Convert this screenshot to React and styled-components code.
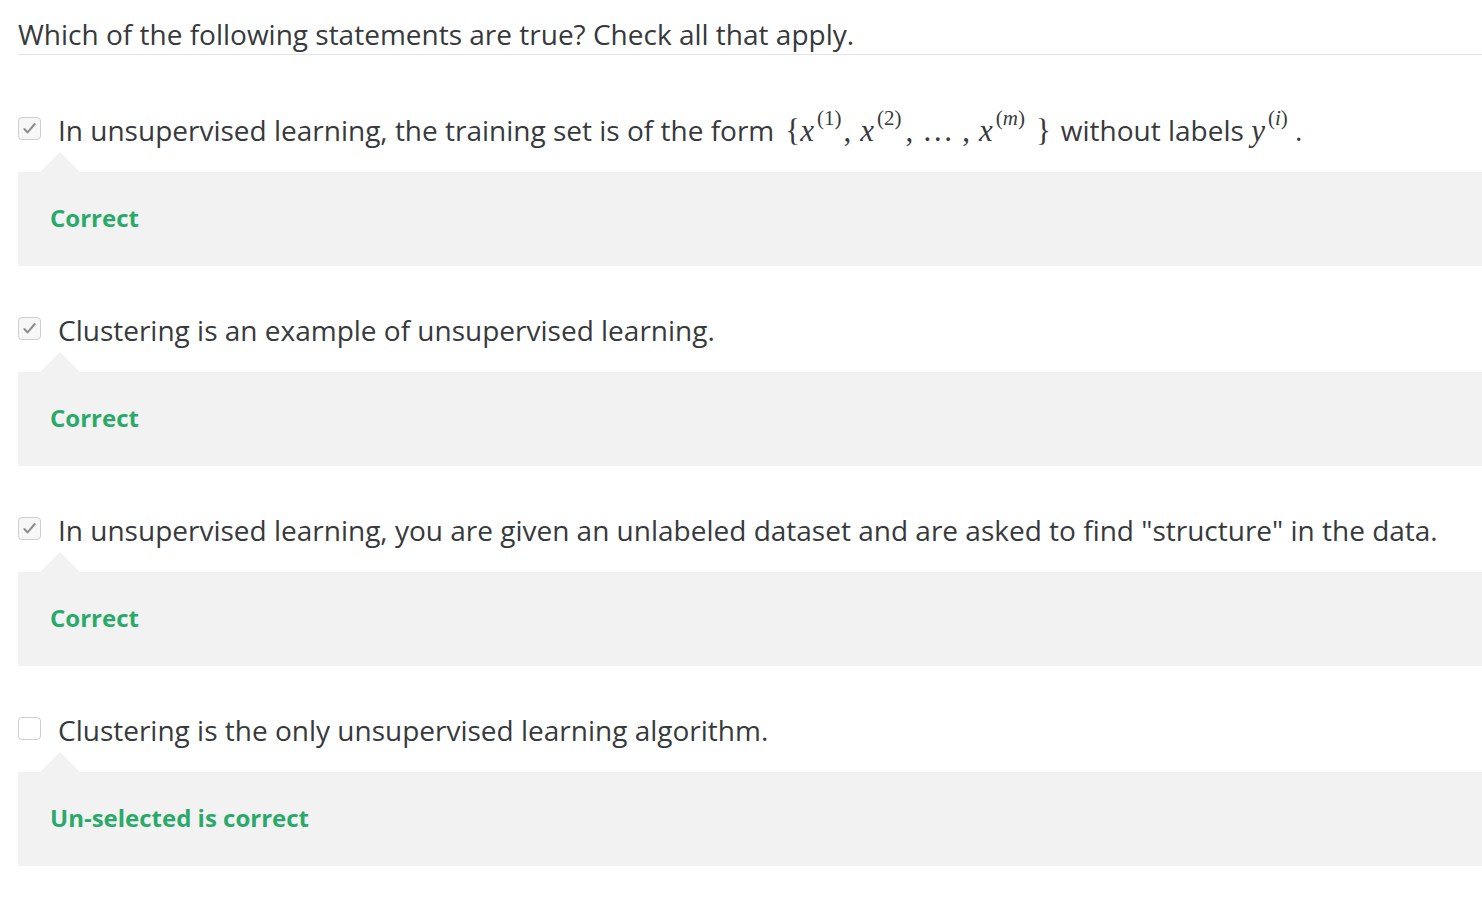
import React from 'react';
import styled, { createGlobalStyle } from 'styled-components';

const GlobalStyle = createGlobalStyle`
  html, body {
    margin: 0;
    padding: 0;
    background: #fff;
  }
  body {
    font-family: "Open Sans", "Liberation Sans", sans-serif;
    color: #373a3c;
  }
`;

const Page = styled.div`
  padding-left: 18px;
`;

const Prompt = styled.div`
  font-size: 28px;
  line-height: 36px;
  padding-top: 16px;
  padding-bottom: 2px;
  border-bottom: 1px solid #e3e3e3;
`;

const List = styled.div`
  display: flex;
  flex-direction: column;
  gap: 46px;
  padding-top: 57px;
`;

const Item = styled.div`
  display: flex;
  flex-direction: column;
`;

const Option = styled.label`
  display: flex;
  align-items: center;
  gap: 17px;
  font-size: 28px;
  line-height: 36px;
  height: 36px;
  white-space: nowrap;
`;

const Box = styled.span`
  flex: none;
  width: 23px;
  height: 23px;
  box-sizing: border-box;
  border: 1px solid #cfcfcf;
  border-radius: 4px;
  background: ${p => (p.$checked ? '#f7f7f7' : '#fff')};
  display: flex;
  align-items: center;
  justify-content: center;
  margin-top: -3px;
`;

const Feedback = styled.div`
  position: relative;
  margin-top: 24px;
  height: 94px;
  box-sizing: border-box;
  padding: 0 0 4px 32px;
  background: #f2f2f2;
  display: flex;
  align-items: center;
  color: #2aa96b;
  font-weight: 700;
  font-size: 24px;

  &::before {
    content: '';
    position: absolute;
    top: -20px;
    left: 22px;
    border-left: 20px solid transparent;
    border-right: 20px solid transparent;
    border-bottom: 20px solid #f2f2f2;
  }
`;

const Math = styled.span`
  font-family: "Liberation Serif", "DejaVu Serif", serif;
  font-size: 31px;
  margin: 0 ${p => (p.$tight ? '0' : '10px')} 0 ${p => (p.$tight ? '0' : '11px')};
  color: #373a3c;
`;

const Var = styled.i`
  font-style: italic;
`;

const Sup = styled.span`
  font-size: 21px;
  line-height: 0;
  position: relative;
  top: -16px;
  margin-left: 3px;
`;

const Sep = styled.span`
  margin: 0 ${p => p.$after}px 0 ${p => p.$before}px;
`;

function Check({ checked }) {
  return (
    <Box $checked={checked}>
      {checked && (
        <svg width="15" height="15" viewBox="0 0 16 16" fill="none">
          <path d="M2.5 8.5 L6 12.2 L13.5 3.2" stroke="#8f8f8f" strokeWidth="2.2" strokeLinecap="round" strokeLinejoin="round" />
        </svg>
      )}
    </Box>
  );
}

const items = [
  {
    checked: true,
    text: (
      <span>
        In unsupervised learning, the training set is of the form
        <Math>
          {'{'}
          <Var>x</Var><Sup>(1)</Sup>
          <Sep $before={2} $after={9}>,</Sep>
          <Var>x</Var><Sup>(2)</Sup>
          <Sep $before={4} $after={9}>,</Sep>
          …
          <Sep $before={9} $after={9}>,</Sep>
          <Var>x</Var><Sup>(<Var>m</Var>)</Sup>
          <Sep $before={11} $after={0}>{'}'}</Sep>
        </Math>
        without labels <Math $tight><Var>y</Var><Sup>(<Var>i</Var>)</Sup></Math>&nbsp;.
      </span>
    ),
    feedback: 'Correct',
  },
  { checked: true, text: 'Clustering is an example of unsupervised learning.', feedback: 'Correct' },
  {
    checked: true,
    text: 'In unsupervised learning, you are given an unlabeled dataset and are asked to find "structure" in the data.',
    feedback: 'Correct',
  },
  { checked: false, text: 'Clustering is the only unsupervised learning algorithm.', feedback: 'Un-selected is correct' },
];

export default function App() {
  return (
    <Page>
      <GlobalStyle />
      <Prompt>Which of the following statements are true? Check all that apply.</Prompt>
      <List>
        {items.map((it, i) => (
          <Item key={i}>
            <Option>
              <Check checked={it.checked} />
              {it.text}
            </Option>
            <Feedback>{it.feedback}</Feedback>
          </Item>
        ))}
      </List>
    </Page>
  );
}
